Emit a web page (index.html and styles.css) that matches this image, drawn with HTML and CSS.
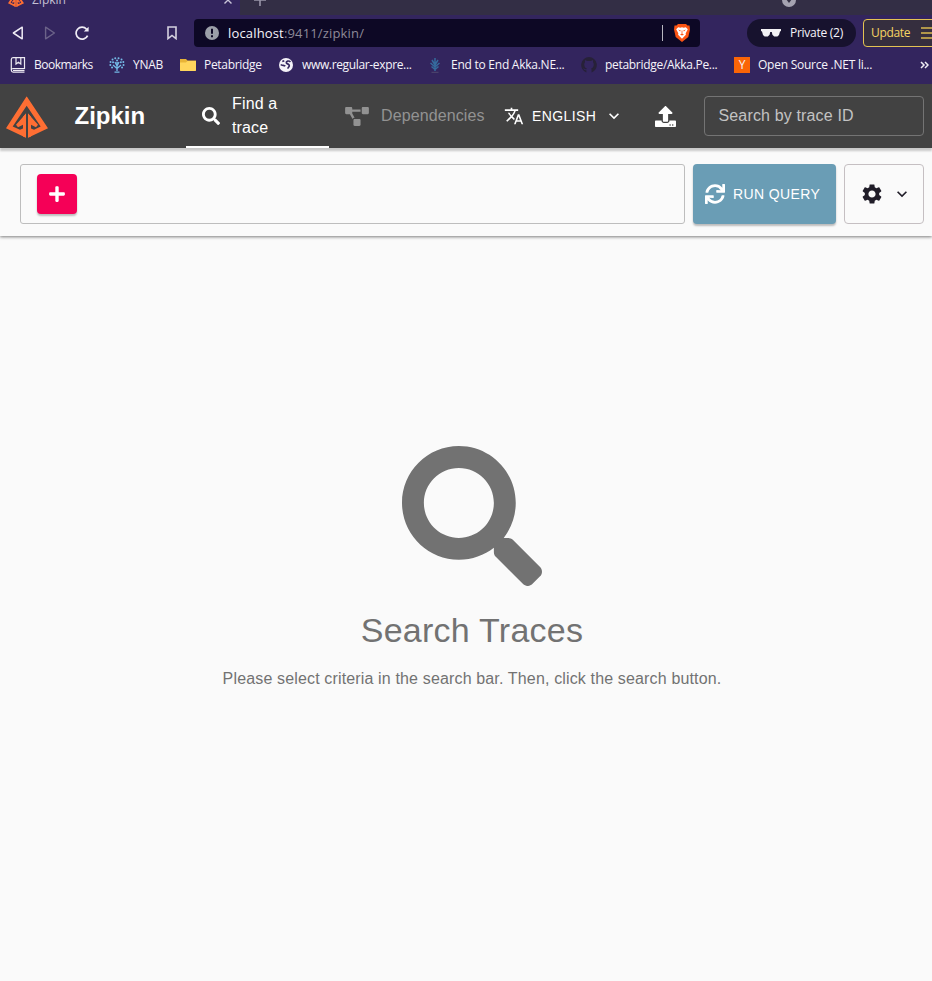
FILE: index.html
```html
<!DOCTYPE html>
<html lang="en">
<head>
<meta charset="utf-8">
<title>Zipkin</title>
<link rel="stylesheet" href="styles.css">
</head>
<body>
<svg class="defs" width="0" height="0" aria-hidden="true">
  <symbol id="logo" viewBox="0 0 126 125">
    <path fill="#fe6e33" d="M62 0L126 96L66 125V52L96 86L90 93L75 86V97L84 101L104 91L62 29L20 91L42 101L51 97V86L36 93L30 86L60 52V125L0 96Z"/>
    <path fill="#fe6e33" d="M51 62L60 52V125L51 121ZM66 52L75 62V121L66 125Z"/>
  </symbol>
  <symbol id="search" viewBox="0 0 512 512"><path d="M505 442.7L405.3 343c-4.5-4.5-10.6-7-17-7H372c27.6-35.3 44-79.7 44-128C416 93.1 322.9 0 208 0S0 93.1 0 208s93.1 208 208 208c48.3 0 92.7-16.4 128-44v16.3c0 6.4 2.5 12.5 7 17l99.7 99.7c9.4 9.4 24.6 9.4 33.9 0l28.3-28.3c9.4-9.4 9.4-24.6.1-34zM208 336c-70.7 0-128-57.2-128-128 0-70.7 57.2-128 128-128 70.7 0 128 57.2 128 128 0 70.7-57.2 128-128 128z"/></symbol>
  <symbol id="chevron" viewBox="0 0 24 24"><path d="M16.59 8.59L12 13.17 7.41 8.59 6 10l6 6 6-6z"/></symbol>
</svg>

<header class="browser">
  <div class="tabs">
    <div class="tab">
      <svg class="tab-logo" width="16" height="16"><use href="#logo"/></svg>
      <span class="tab-title">Zipkin</span>
      <svg class="tab-close" width="8" height="8" viewBox="0 0 8 8"><path d="M.5.5l7 7M7.5.5l-7 7" stroke="#c9c4d8" stroke-width="1.4"/></svg>
    </div>
    <svg class="tab-new" width="14" height="14" viewBox="0 0 14 14"><path d="M7 1v12M1 7h12" stroke="#9995a8" stroke-width="1.6"/></svg>
    <svg class="tab-menu" width="14" height="14" viewBox="0 0 14 14"><circle cx="7" cy="7" r="7" fill="#a5a2b1"/><path d="M4 6l3 4 3-4z" fill="#343044"/></svg>
  </div>
  <div class="toolbar">
    <svg class="nav-back" width="12" height="14" viewBox="0 0 12 14"><path d="M10.2 1.2v11.6L1.4 7z" fill="none" stroke="#efecf5" stroke-width="1.5" stroke-linejoin="round"/></svg>
    <svg class="nav-next" width="12" height="14" viewBox="0 0 12 14"><path d="M1.6 1.2v11.6L10.4 7z" fill="none" stroke="#6c6389" stroke-width="1.4" stroke-linejoin="round"/></svg>
    <svg class="nav-reload" width="15" height="15" viewBox="0 0 15 15"><path d="M11.6 3.2A6 6 0 1 0 12.6 9.6" fill="none" stroke="#efecf5" stroke-width="1.7"/><path d="M13.6.8v4.8H8.8z" fill="#efecf5"/></svg>
    <svg class="nav-mark" width="10" height="14" viewBox="0 0 10 14"><path d="M1 1h8v11.6L5 9.4 1 12.6z" fill="none" stroke="#d5d1df" stroke-width="1.6"/></svg>
    <div class="address">
      <svg width="14" height="14" viewBox="0 0 14 14"><circle cx="7" cy="7" r="7" fill="#9b9fa8"/><path d="M7 2.8v5M7 9.3v2" stroke="#0d0825" stroke-width="2"/></svg>
      <span class="url">localhost<i>:9411/zipkin/</i></span>
      <span class="address-rule"></span>
      <svg class="brave" width="16" height="18" viewBox="0 0 16 18"><path fill="#fb5413" d="M4 0h8l1.5 1.6 2-.1.5 4-1.7 7.5L8 18l-6.3-5L0 5.5l.5-4 2 .1z"/><path fill="#fff" d="M2.2 5.2l2-2 2.1.5L8 3.2l1.7.5 2.1-.5 2 2-2.1 4 .2 1.6L8 14.8l-3.9-4 .2-1.6z"/><path fill="#fb5413" d="M4 5.6l2.8.8-.7 1.2zM12 5.6l-2.8.8.7 1.2zM7.6 6.5h.8v3h-.8zM6 10.4L8 9.6l2 .8L8 11.6z"/></svg>
    </div>
    <div class="private">
      <svg width="20" height="8" viewBox="0 0 20 8"><path fill="#f2f1f4" d="M0 0h20v2l-1 .5-1 3.5-1.6 1.5h-3.2L11.4 5.8 10.8 3H9.2l-.6 2.8-1.8 1.7H3.6L2 6 1 2.5 0 2z"/></svg>
      <span>Private (2)</span>
    </div>
    <div class="update"><span>Update</span><svg width="13" height="12" viewBox="0 0 13 12"><path d="M0 1h13M0 6h13M0 11h13" stroke="#d9b94f" stroke-width="1.6"/></svg></div>
  </div>
  <nav class="bookmarks">
    <span class="mark mark-all"><svg width="16" height="16" viewBox="0 0 16 16"><path d="M3 .7h11.5v10.8H3.2a1.8 1.8 0 0 0 0 3.7h11.3M3 .7a1.8 1.8 0 0 0-1.7 1.8v10.7M6 1v6l2.4-1.8L10.8 7V1M3 13.3h11.5" fill="none" stroke="#edeaf2" stroke-width="1.2"/></svg><span class="t">Bookmarks</span></span>
    <span class="mark mark-ynab"><svg width="16" height="16" viewBox="0 0 16 16"><path d="M8 7v7M8 11.5L4 8M8 11.5L12 8M8 9L6 5M8 9l2-4M5.5 15.2h5" fill="none" stroke="#74b9e6" stroke-width="1.3"/><path d="M1.5 5h.1M3.5 2.5h.1M6.2 1.2h.1M9.5 1.2h.1M12.5 2.5h.1M14.3 5h.1M1.3 8h.1M14.5 8h.1M3 10.5h.1M13 10.5h.1M8 3.5h.1M4 5.2h.1M11.8 5.2h.1M8 6h.1" stroke="#74b9e6" stroke-width="1.9" stroke-linecap="round"/></svg><span class="t">YNAB</span></span>
    <span class="mark mark-peta"><svg width="16" height="14" viewBox="0 0 16 14"><path fill="#e8b437" d="M0 1h6l1.5 1.6H16V12a1 1 0 0 1-1 1H1a1 1 0 0 1-1-1z"/><path fill="#ffd55c" d="M0 4.5h6L7.5 3H16v9a1 1 0 0 1-1 1H1a1 1 0 0 1-1-1z"/></svg><span class="t">Petabridge</span></span>
    <span class="mark mark-regex"><svg width="14" height="14" viewBox="0 0 14 14"><circle cx="7" cy="7" r="7" fill="#f4f2f8"/><path d="M11.5 3.8C9.8 2.4 7 3 7.3 4.8c.3 1.3 3.2 1 3 3-.2 1.2-1.3 1.6-1.5 2.8M1.8 6.5c1.3 1.4 3.5.4 4.4 1.8M3.3 3.5l2-.8" fill="none" stroke="#33255e" stroke-width="1.7"/></svg><span class="t">www.regular-expre...</span></span>
    <span class="mark mark-akka"><svg width="12" height="16" viewBox="0 0 12 16"><path d="M6 1v13M6 8L3 3M6 8l3-5M6 10L1.5 6M6 10l4.5-4M6 12.5l-3.5-3M6 12.5l3.5-3" fill="none" stroke="#356b9d" stroke-width="1.5"/><path d="M2.5 15.3h7" stroke="#51496e"/></svg><span class="t">End to End Akka.NE...</span></span>
    <span class="mark mark-git"><svg width="16" height="16" viewBox="0 0 16 16"><path fill="#272138" fill-rule="evenodd" d="M8 0a8 8 0 0 0-2.6 15.5v-2.2C3 13.6 2.6 12 2.2 11.3c1.2 0 1.4 1.4 3.3 1l.4-.9C3 10.8 2.6 6.5 4 5.2V3.2c1 0 1.6.6 2 .8h4c.4-.2 1-.8 2-.8v2c1.4 1.3 1 5.6-1.9 6.2.5.6.5 1 .5 4.1A8 8 0 0 0 8 0z"/></svg><span class="t">petabridge/Akka.Pe...</span></span>
    <span class="mark mark-yc"><b class="yc">Y</b><span class="t">Open Source .NET li...</span></span>
    <svg class="more" width="9" height="8" viewBox="0 0 9 8"><path d="M1 1l3 3-3 3M5 1l3 3-3 3" fill="none" stroke="#f0edf5" stroke-width="1.5"/></svg>
  </nav>
</header>

<div class="appbar">
  <svg class="app-logo" width="42" height="42" viewBox="0 0 126 125"><use href="#logo"/></svg>
  <h1>Zipkin</h1>
  <a class="nav-item active"><svg class="fill" width="18" height="18"><use href="#search"/></svg><span>Find a<br>trace</span></a>
  <a class="nav-item deps"><svg class="fill" width="24" height="19" viewBox="0 0 640 512"><path d="M384 320H256c-17.67 0-32 14.33-32 32v128c0 17.67 14.33 32 32 32h128c17.67 0 32-14.33 32-32V352c0-17.67-14.33-32-32-32zM192 32c0-17.67-14.33-32-32-32H32C14.33 0 0 14.33 0 32v128c0 17.67 14.33 32 32 32h95.72l73.16 128.04C211.98 300.98 232.4 288 256 288h.28L192 175.51V128h224V64H192V32zM608 0H480c-17.67 0-32 14.33-32 32v128c0 17.67 14.33 32 32 32h128c17.67 0 32-14.33 32-32V32c0-17.67-14.33-32-32-32z"/></svg><span>Dependencies</span></a>
  <button class="lang"><svg class="fill" width="20" height="20" viewBox="0 0 24 24"><path d="M12.87 15.07l-2.54-2.51.03-.03c1.74-1.94 2.98-4.17 3.71-6.53H17V4h-7V2H8v2H1v1.99h11.17C11.5 7.92 10.44 9.75 9 11.35 8.07 10.32 7.3 9.19 6.69 8h-2c.73 1.63 1.73 3.17 2.98 4.56l-5.09 5.02L4 19l5-5 3.11 3.11.76-2.04zM18.5 10h-2L12 22h2l1.12-3h4.75L21 22h2l-4.5-12zm-2.62 7l1.62-4.33L19.12 17h-3.24z"/></svg><span>ENGLISH</span><svg class="fill caret" width="20" height="20"><use href="#chevron"/></svg></button>
  <svg class="fill upload" width="21" height="21" viewBox="0 0 512 512"><path d="M296 384h-80c-13.3 0-24-10.7-24-24V192h-87.7c-17.8 0-26.7-21.5-14.1-34.1L242.3 5.7c7.5-7.5 19.8-7.5 27.3 0l152.2 152.2c12.6 12.6 3.7 34.1-14.1 34.1H320v168c0 13.3-10.7 24-24 24zm216-8v112c0 13.3-10.7 24-24 24H24c-13.3 0-24-10.7-24-24V376c0-13.3 10.7-24 24-24h136v8c0 30.9 25.1 56 56 56h80c30.9 0 56-25.1 56-56v-8h136c13.3 0 24 10.7 24 24zm-124 88c0-11-9-20-20-20s-20 9-20 20 9 20 20 20 20-9 20-20zm64 0c0-11-9-20-20-20s-20 9-20 20 9 20 20 20 20-9 20-20z"/></svg>
  <div class="trace-id">Search by trace ID</div>
</div>

<section class="searchbar">
  <div class="criteria"><button class="add"><svg class="fill" width="16" height="18" viewBox="0 0 448 512"><path d="M416 208H272V64c0-17.67-14.33-32-32-32h-32c-17.67 0-32 14.33-32 32v144H32c-17.67 0-32 14.33-32 32v32c0 17.67 14.33 32 32 32h144v144c0 17.67 14.33 32 32 32h32c17.67 0 32-14.33 32-32V304h144c17.67 0 32-14.33 32-32v-32c0-17.67-14.33-32-32-32z"/></svg></button></div>
  <button class="run"><svg class="fill" width="20" height="20" viewBox="0 0 512 512"><path d="M440.65 12.57l4 82.77A247.16 247.16 0 0 0 255.83 8C134.73 8 33.91 94.92 12.29 209.82A12 12 0 0 0 24.09 224h49.05a12 12 0 0 0 11.67-9.26 175.91 175.91 0 0 1 317-56.94l-101.46-4.86a12 12 0 0 0-12.57 12v47.41a12 12 0 0 0 12 12H500a12 12 0 0 0 12-12V12a12 12 0 0 0-12-12h-47.37a12 12 0 0 0-11.98 12.57zM255.83 432a175.61 175.61 0 0 1-146-77.8l101.8 4.87a12 12 0 0 0 12.57-12v-47.4a12 12 0 0 0-12-12H12a12 12 0 0 0-12 12V500a12 12 0 0 0 12 12h47.35a12 12 0 0 0 12-12.6l-4.15-82.57A247.17 247.17 0 0 0 255.83 504c121.11 0 221.93-86.92 243.55-201.82a12 12 0 0 0-11.8-14.18h-49.05a12 12 0 0 0-11.67 9.26A175.86 175.86 0 0 1 255.83 432z"/></svg><span>RUN QUERY</span></button>
  <button class="settings"><svg class="fill" width="24" height="24" viewBox="0 0 24 24"><path d="M19.14 12.94c.04-.3.06-.61.06-.94 0-.32-.02-.64-.07-.94l2.03-1.58c.18-.14.23-.41.12-.61l-1.92-3.32c-.12-.22-.37-.29-.59-.22l-2.39.96c-.5-.38-1.03-.7-1.62-.94l-.36-2.54c-.04-.24-.24-.41-.48-.41h-3.84c-.24 0-.43.17-.47.41l-.36 2.54c-.59.24-1.13.57-1.62.94l-2.39-.96c-.22-.08-.47 0-.59.22L2.74 8.87c-.12.21-.08.47.12.61l2.03 1.58c-.05.3-.09.63-.09.94s.02.64.07.94l-2.03 1.58c-.18.14-.23.41-.12.61l1.92 3.32c.12.22.37.29.59.22l2.39-.96c.5.38 1.03.7 1.62.94l.36 2.54c.05.24.24.41.48.41h3.84c.24 0 .44-.17.47-.41l.36-2.54c.59-.24 1.13-.56 1.62-.94l2.39.96c.22.08.47 0 .59-.22l1.92-3.32c.12-.22.07-.47-.12-.61l-2.01-1.58zM12 15.6c-1.98 0-3.6-1.62-3.6-3.6s1.62-3.6 3.6-3.6 3.6 1.62 3.6 3.6-1.62 3.6-3.6 3.6z"/></svg><svg class="fill" width="20" height="20"><use href="#chevron"/></svg></button>
</section>

<main class="empty">
  <svg class="fill" width="140" height="140"><use href="#search"/></svg>
  <h2>Search Traces</h2>
  <p>Please select criteria in the search bar. Then, click the search button.</p>
</main>
</body>
</html>
```
FILE: styles.css
```css
* { box-sizing: border-box; }
body {
  margin: 0;
  height: 981px;
  overflow: hidden;
  background: #fafafa;
  font-family: "Liberation Sans", Arial, sans-serif;
  display: flex;
  flex-direction: column;
}
svg { display: block; flex: none; }
.defs { position: absolute; }
.fill { fill: currentColor; }
button { font: inherit; border: 0; background: none; padding: 0; margin: 0; color: inherit; }

/* Browser frame */
.browser {
  flex: none;
  height: 84px;
  background: #33255e;
  color: #f6f4fa;
  font: 12px/16px "Open Sans", "Noto Sans", sans-serif;
  white-space: nowrap;
  overflow: hidden;
}
.tabs { height: 15px; display: flex; align-items: flex-start; background: #332e45; overflow: hidden; }
.tab { width: 240px; height: 15px; flex: none; display: flex; padding-left: 8px; background: #33255e; }
.tab-logo { margin-top: -9px; }
.tab-title { width: 40px; margin: -8px 0 0 8px; color: #c5c0d4; }
.tab-close { margin: -4px 0 0 152px; }
.tab-new { margin: -7px 0 0 13px; }
.tab-menu { margin: -7px 0 0 515px; }
.toolbar { height: 34px; display: flex; align-items: center; padding: 2px 0 0 12px; }
.nav-next { margin-left: 20px; }
.nav-reload { margin-left: 19px; }
.nav-mark { margin-left: 77px; }
.address { width: 506px; height: 28px; flex: none; margin-left: 17px; padding: 0 10px 0 11px; display: flex; align-items: center; border-radius: 4px; background: #0d0825; }
.url { margin-left: 9px; flex: 1; font-size: 13px; letter-spacing: .16px; }
.url i { font-style: normal; color: #8d8a98; }
.address-rule { width: 1px; height: 16px; background: #b9b7c0; margin-right: 11px; }
.private { width: 109px; height: 28px; flex: none; margin-left: 47px; padding-left: 14px; display: flex; align-items: center; gap: 9px; border-radius: 14px; background: #17122e; letter-spacing: -.27px; }
.update { width: 90px; height: 28px; flex: none; margin-left: 7px; padding-left: 7px; display: flex; align-items: center; gap: 10px; border: 1px solid #e3c353; border-radius: 4px; background: #352e3e; color: #f5d463; }
.update span { width: 40px; letter-spacing: -.35px; }
.bookmarks { height: 32px; display: flex; align-items: center; padding: 0 0 0 10px; }
.mark { display: flex; align-items: center; flex: none; letter-spacing: -.3px; }
.mark .t { margin-left: 8px; }
.mark-all { width: 99px; letter-spacing: -.5px; }
.mark-ynab { width: 71px; }
.mark-peta { width: 99px; }
.mark-regex { width: 150px; letter-spacing: -.35px; }
.mark-regex .t { margin-left: 9px; }
.mark-akka { width: 152px; letter-spacing: -.25px; }
.mark-akka .t { margin-left: 10px; }
.mark-git { width: 153px; }
.mark-yc { width: 186px; letter-spacing: -.25px; }
.yc { width: 16px; height: 16px; background: #fb6506; font-weight: 400; text-align: center; letter-spacing: 0; }

/* Application bar */
.appbar { height: 64px; flex: none; position: relative; z-index: 2; display: flex; align-items: center; padding: 0 8px 0 6px; background: #424242; color: #fff; box-shadow: 0 3px 2px rgba(0, 0, 0, .2); }
.app-logo { margin-top: 1px; }
h1 { width: 111.5px; margin: 0 0 0 26.5px; font-size: 24px; line-height: 32px; font-weight: 700; letter-spacing: 0; }
.nav-item { display: flex; align-items: center; height: 64px; font-size: 16px; line-height: 24px; letter-spacing: .15px; }
.active { width: 143px; padding: 2px 0 0 16px; gap: 12px; border-bottom: 2px solid #fff; }
.deps { width: 159px; padding-left: 16px; gap: 12px; color: #929292; }
.deps span { letter-spacing: .1px; }
.lang { width: 134px; margin-left: 16px; display: flex; align-items: center; gap: 8px; font-size: 14px; letter-spacing: .4px; }
.upload { margin: 0 0 0 17px; }
.trace-id { width: 220px; height: 40px; margin-left: auto; padding: 0 13.5px; border: 1px solid #747474; border-radius: 4px; font-size: 16px; line-height: 37px; color: #c3c3c3; letter-spacing: .15px; }

/* Query bar */
.searchbar { height: 88px; flex: none; display: flex; gap: 8px; padding: 16px 8px 12px 20px; background: #fafafa; box-shadow: 0 1px 3px rgba(0, 0, 0, .5); }
.criteria { flex: 1; display: flex; align-items: center; padding-left: 16px; border: 1px solid #bdbdbd; border-radius: 3px; }
.add { width: 40px; height: 40px; display: flex; align-items: center; justify-content: center; border-radius: 4px; background: #f50057; color: #fff; box-shadow: 0 2px 2px rgba(0, 0, 0, .25); }
.run { width: 143px; display: flex; align-items: center; gap: 8px; padding-left: 12px; border-radius: 4px; background: #6a9db5; color: #fff; font-size: 14px; letter-spacing: .4px; box-shadow: 0 2px 2px rgba(0, 0, 0, .25); }
.settings { width: 80px; display: flex; align-items: center; gap: 8px; padding-left: 15px; border: 1px solid #c5bfc2; border-radius: 4px; color: #201d28; }

/* Empty state */
.empty { display: flex; flex-direction: column; align-items: center; padding: 210px 0 0 12px; color: #727272; }
h2 { margin: 23px 0 0; font-size: 34px; line-height: 42px; font-weight: 400; letter-spacing: .25px; }
p { margin: 16px 0 0; font-size: 16px; line-height: 24px; letter-spacing: .15px; white-space: nowrap; }
```
